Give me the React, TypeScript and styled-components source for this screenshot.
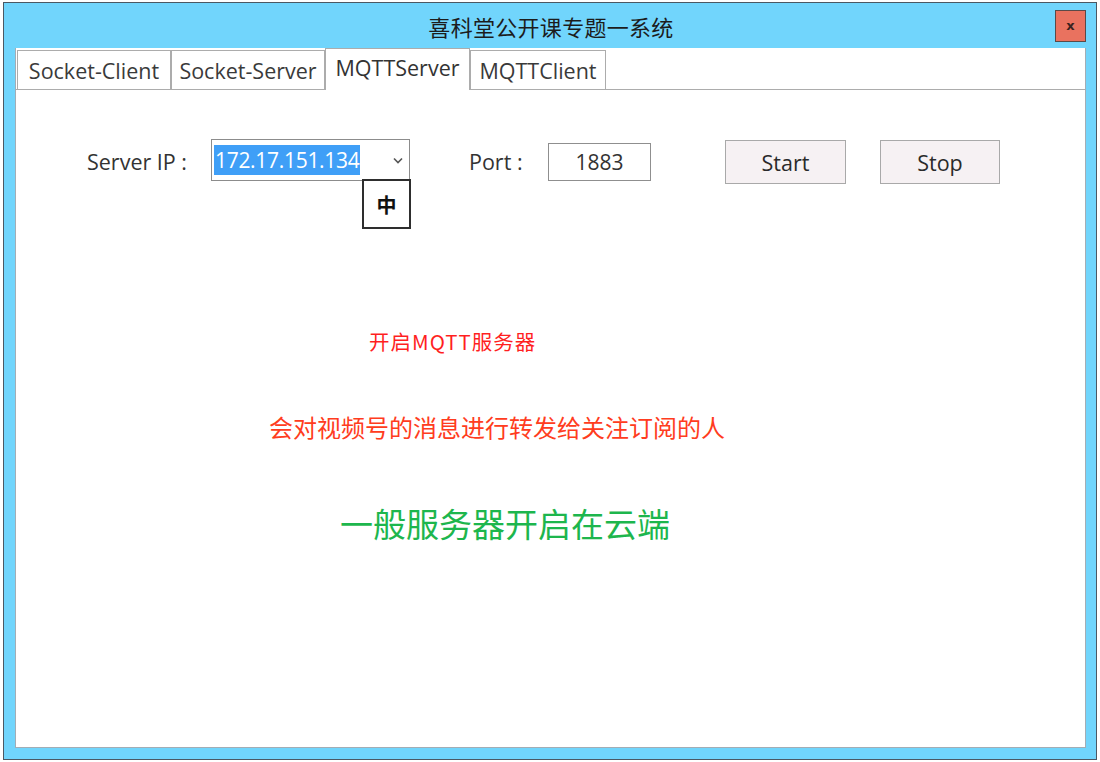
import React from "react";
import styled, { createGlobalStyle } from "styled-components";

const GlobalStyle = createGlobalStyle`
  html, body {
    margin: 0;
    padding: 0;
    background: #ffffff;
  }
  body {
    font-family: "Open Sans", "Noto Sans CJK SC", sans-serif;
    color: #222;
  }
`;

const Window = styled.div`
  margin: 2px 0 0 3px;
  width: 1094px;
  height: 758px;
  box-sizing: border-box;
  border: 1px solid #4b5863;
  background: #71d5fc;
  display: flex;
  flex-direction: column;
`;

const TitleBar = styled.div`
  position: relative;
  height: 45px;
  display: flex;
  align-items: center;
  justify-content: center;
`;

const Title = styled.div`
  font-family: "Noto Sans CJK SC", sans-serif;
  font-size: 22px;
  letter-spacing: 0.3px;
  color: #1c1c1c;
  margin-left: 2px;
`;

// close button sits over the right end of the title bar
const CloseBtn = styled.div`
  position: absolute;
  right: 10px;
  top: 7px;
  width: 31px;
  height: 32px;
  box-sizing: border-box;
  background: #e9725f;
  border: 1px solid #5a4a48;
  display: flex;
  align-items: center;
  justify-content: center;
  font-family: "DejaVu Sans", sans-serif;
  font-weight: bold;
  font-size: 13px;
  color: #3a2320;
  padding-bottom: 2px;
`;

const Body = styled.div`
  flex: 1;
  display: flex;
  padding: 0 10px 11px 11px;
`;

const Frame = styled.div`
  flex: 1;
  background: #fff;
  border: 1px solid #a3adb5;
  border-top: none;
  display: flex;
  flex-direction: column;
`;

const TabRow = styled.div`
  display: flex;
  align-items: flex-start;
  height: 41px;
  padding-left: 1px;
  border-bottom: 1px solid #acacac;
`;

const Tab = styled.div<{ $w: number; $active?: boolean }>`
  width: ${({ $w }) => $w}px;
  box-sizing: border-box;
  height: ${({ $active }) => ($active ? 42 : 39)}px;
  margin-top: ${({ $active }) => ($active ? 0 : 2)}px;
  border: 1px solid #acacac;
  border-bottom: none;
  background: #fff;
  display: flex;
  align-items: center;
  justify-content: center;
  font-size: 21.5px;
  letter-spacing: 0px;
  color: ${({ $active }) => ($active ? "#333" : "#3a3a3a")};
  padding-bottom: ${({ $active }) => ($active ? 4 : 0)}px;
  position: relative;
  z-index: ${({ $active }) => ($active ? 1 : 0)};
  white-space: nowrap;
`;

const Panel = styled.div`
  flex: 1;
  display: flex;
  flex-direction: column;
`;

const Row = styled.div`
  display: flex;
  align-items: center;
  height: 44px;
  margin-top: 50px;
  padding-left: 71px;
`;

const Label = styled.div<{ $w: number; $ml?: number }>`
  width: ${({ $w }) => $w}px;
  margin-left: ${({ $ml }) => $ml ?? 0}px;
  margin-top: -2px;
  font-size: 21.5px;
  color: #333;
  white-space: nowrap;
`;

const Combo = styled.div`
  position: relative;
  width: 199px;
  height: 42px;
  box-sizing: border-box;
  border: 1px solid #8c8c8c;
  margin-top: -4px;
  display: flex;
  align-items: center;
  padding-left: 2px;
`;

const Selected = styled.span`
  background: #3f9ff7;
  color: #fff;
  font-size: 21px;
  letter-spacing: -0.3px;
  line-height: 30px;
  padding: 0 1px;
`;

const Chevron = styled.svg`
  position: absolute;
  right: 6px;
  top: 17px;
`;

const ImeBox = styled.div`
  position: absolute;
  left: 150px;
  top: 39px;
  width: 49px;
  height: 50px;
  box-sizing: border-box;
  border: 2px solid #2e2e2e;
  background: #fff;
  display: flex;
  align-items: center;
  justify-content: center;
  font-family: "Noto Sans CJK SC", sans-serif;
  font-weight: bold;
  font-size: 20px;
  color: #111;
`;

const Input = styled.div`
  width: 103px;
  height: 38px;
  box-sizing: border-box;
  border: 1px solid #8f8f8f;
  display: flex;
  align-items: center;
  justify-content: center;
  font-size: 21px;
  color: #333;
`;

const Button = styled.div<{ $w: number; $ml: number }>`
  width: ${({ $w }) => $w}px;
  margin-left: ${({ $ml }) => $ml}px;
  height: 44px;
  box-sizing: border-box;
  border: 1px solid #a9a9a9;
  background: #f6f1f3;
  display: flex;
  align-items: center;
  justify-content: center;
  font-size: 21.5px;
  color: #2a2a2a;
`;

const Notes = styled.div`
  display: flex;
  flex-direction: column;
  align-items: flex-start;
`;

const Note = styled.div<{ $indent: number; $size: number; $color: string; $mt: number; $ls?: number }>`
  margin-top: ${({ $mt }) => $mt}px;
  padding-left: ${({ $indent }) => $indent}px;
  font-family: "Noto Sans CJK SC", sans-serif;
  font-size: ${({ $size }) => $size}px;
  letter-spacing: ${({ $ls }) => $ls ?? 0}px;
  line-height: ${({ $size }) => Math.round($size * 1.2)}px;
  color: ${({ $color }) => $color};
  white-space: nowrap;
`;

const tabs = [
  { label: "Socket-Client", w: 154 },
  { label: "Socket-Server", w: 154 },
  { label: "MQTTServer", w: 145, active: true },
  { label: "MQTTClient", w: 136 },
];

export default function App() {
  return (
    <>
      <GlobalStyle />
      <Window>
        <TitleBar>
          <Title>喜科堂公开课专题一系统</Title>
          <CloseBtn>x</CloseBtn>
        </TitleBar>
        <Body>
          <Frame>
            <TabRow>
              {tabs.map((t) => (
                <Tab key={t.label} $w={t.w} $active={t.active}>
                  {t.label}
                </Tab>
              ))}
            </TabRow>
            <Panel>
              <Row>
                <Label $w={124}>Server IP :</Label>
                <Combo>
                  <Selected>172.17.151.134</Selected>
                  <Chevron width="10" height="7" viewBox="0 0 10 7">
                    <path d="M1 1.5 L5 5.5 L9 1.5" fill="none" stroke="#555" strokeWidth="1.6" />
                  </Chevron>
                  <ImeBox>中</ImeBox>
                </Combo>
                <Label $w={79} $ml={59}>Port :</Label>
                <Input>1883</Input>
                <Button $w={121} $ml={74}>Start</Button>
                <Button $w={120} $ml={34}>Stop</Button>
              </Row>
              <Notes>
                <Note $indent={353} $size={20.5} $ls={1} $color="#ff1f1f" $mt={145}>开启MQTT服务器</Note>
                <Note $indent={253} $size={24} $color="#ff3c20" $mt={58}>会对视频号的消息进行转发给关注订阅的人</Note>
                <Note $indent={324} $size={33} $color="#1db64d" $mt={62}>一般服务器开启在云端</Note>
              </Notes>
            </Panel>
          </Frame>
        </Body>
      </Window>
    </>
  );
}
